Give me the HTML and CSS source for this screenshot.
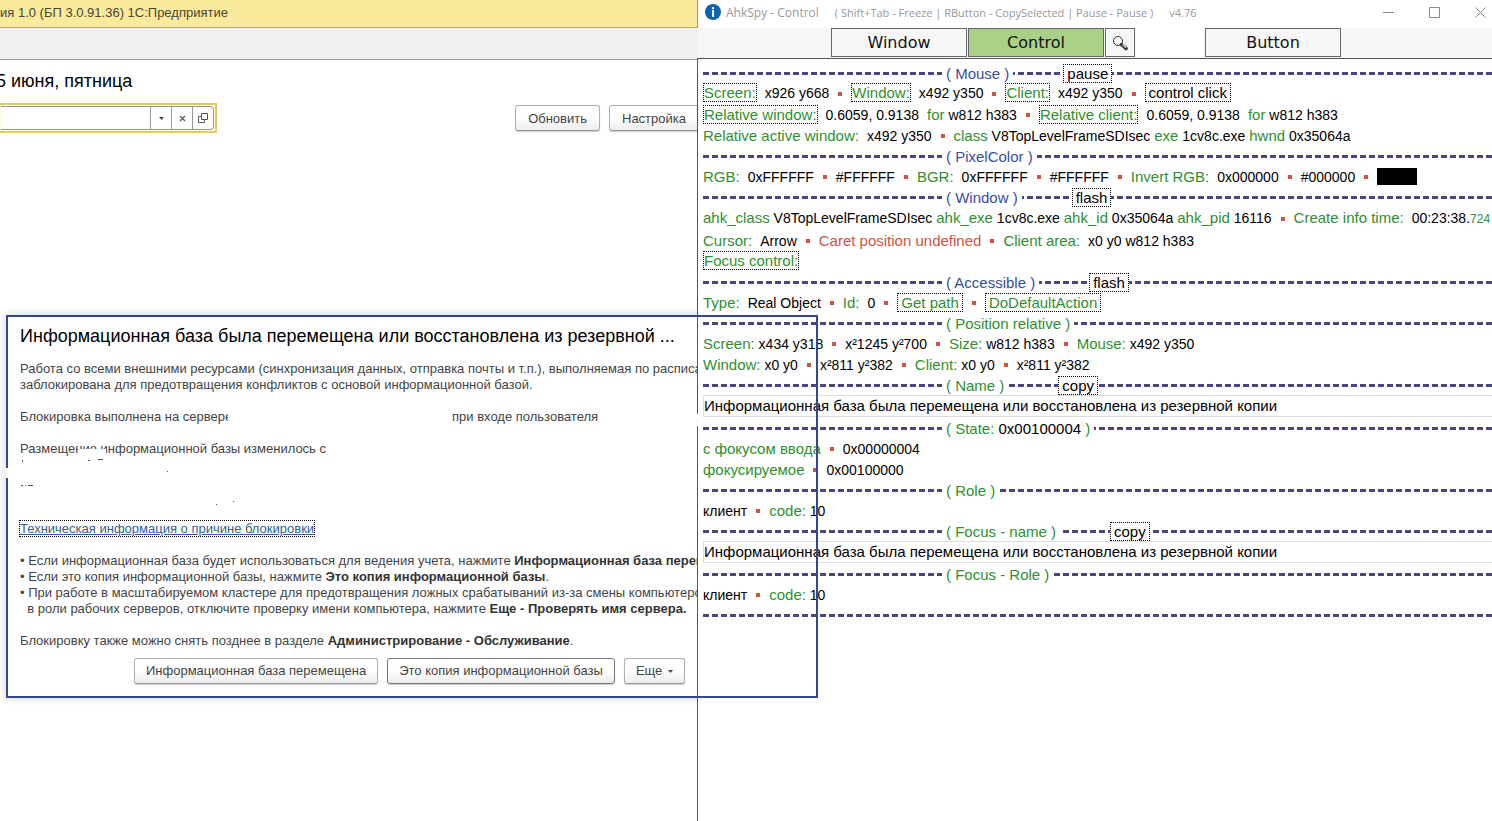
FILE: index.html
```html
<!DOCTYPE html>
<html lang="ru">

<head>
    <meta charset="UTF-8">
    <meta name="viewport" content="width=device-width, initial-scale=1.0">
    <title>AhkSpy - Control</title>
    <link rel="stylesheet" href="styles.css">
</head>

<body>
    <div class="desktop">
        <!-- 1C -->
        <main class="app">
            <header class="app-title"><span>ия 1.0 (БП 3.0.91.36) 1С:Предприятие</span></header>
            <div class="app-bar"></div>
            <h1 class="app-date">5 июня, пятница</h1>
            <div class="app-tools">
                <div class="field">
                    <input type="text" aria-label="Организация">
                    <button type="button" aria-label="Выбрать"><svg width="5" height="3"><path d="M0 0h5L2.500 3z" fill="#444"/></svg></button>
                    <button type="button" aria-label="Очистить"><svg width="7" height="7"><path d="M1 1l5 5M6 1l-5 5" stroke="#555" stroke-width="1.200"/></svg></button>
                    <button type="button" aria-label="Открыть"><svg width="10" height="10" fill="none" stroke="#555"><path d="M3.500 0.500h6v6h-6zM3 3.500H0.500v6h6V7"/></svg></button>
                </div>
                <div class="app-actions">
                    <button type="button" class="btn">Обновить</button>
                    <button type="button" class="btn">Настройка</button>
                </div>
            </div>
        </main>

        <section class="dialog">
            <h2>Информационная база была перемещена или восстановлена из резервной ...</h2>
            <div class="dialog-text">
                <p>Работа со всеми внешними ресурсами (синхронизация данных, отправка почты и т.п.), выполняемая по расписанию,<br>
                заблокирована для предотвращения конфликтов с основой информационной базой.</p>
                <p class="server"><span>Блокировка выполнена на сервере</span><span>при входе пользователя</span></p>
                <p class="moved">Размещение информационной базы изменилось с</p>
                <svg class="specks" width="240" height="64" fill="#555">
                    <path d="M2 3h1v2h-1zM68 3h2v1h-2zM78 2h5v1h-5zM147 14h1v1h-1zM1 28h2v1h-2zM5 28h1v1h-1zM8 28h5v1h-5zM196 47h1v1h-1zM213 44h1v1h-1z"/>
                </svg>
                <p><a href="#" class="tech">Техническая информация о причине блокировки</a></p>
                <p>• Если информационная база будет использоваться для ведения учета, нажмите <b>Информационная база перемещена</b>.<br>
                • Если это копия информационной базы, нажмите <b>Это копия информационной базы</b>.<br>
                • При работе в масштабируемом кластере для предотвращения ложных срабатываний из-за смены компьютеров<br>
                &nbsp; в роли рабочих серверов, отключите проверку имени компьютера, нажмите <b>Еще - Проверять имя сервера.</b></p>
                <p>Блокировку также можно снять позднее в разделе <b>Администрирование - Обслуживание</b>.</p>
            </div>
            <div class="dialog-actions">
                <button type="button" class="btn">Информационная база перемещена</button>
                <button type="button" class="btn btn-focus">Это копия информационной базы</button>
                <button type="button" class="btn">Еще <svg width="5" height="3"><path d="M0 0h5L2.500 3z" fill="#444"/></svg></button>
            </div>
        </section>

        <!-- AhkSpy -->
        <section class="spy">
            <header class="spy-title">
                <svg width="16" height="16"><circle cx="8" cy="8" r="8" fill="#0f63b0"/><path d="M7 3h2v2h-2zM7 6h2v7h-2z" fill="#fff"/></svg>
                <span class="caption">AhkSpy - Control</span>
                <span class="keys">( Shift+Tab - Freeze | RButton - CopySelected | Pause - Pause )</span>
                <span class="version">v4.76</span>
                <div class="win-buttons">
                    <button type="button" aria-label="Свернуть"><svg width="11" height="11"><path d="M0 5.500h11"/></svg></button>
                    <button type="button" aria-label="Развернуть"><svg width="11" height="11"><path d="M0.500 0.500h10v10h-10z"/></svg></button>
                    <button type="button" aria-label="Закрыть"><svg width="11" height="11"><path d="M0.500 0.500l10 10M10.500 0.500l-10 10"/></svg></button>
                </div>
            </header>
            <nav class="spy-tabs">
                <button type="button" class="tab">Window</button>
                <button type="button" class="tab active">Control</button>
                <button type="button" class="tab find" aria-label="Поиск"><svg width="16" height="16" fill="none" stroke="#333"><circle cx="6" cy="6" r="4.500"/><path d="M9.500 9.500l4.500 4" stroke-width="3.500" stroke-linecap="round"/><path d="M10.500 9.500l3.500 3.200" stroke="#ddd" stroke-width="1.200"/></svg></button>
                <input type="text" class="search" aria-label="Текст поиска">
                <button type="button" class="tab">Button</button>
            </nav>
            <div class="report">
                <div class="head"><span class="blue">( Mouse )</span><button type="button" class="cmd">pause</button></div>
                <div class="row"><button type="button" class="key">Screen:</button><span class="val">x926 y668</span><i></i><button type="button" class="key">Window:</button><span class="val">x492 y350</span><i></i><button type="button" class="key">Client:</button><span class="val">x492 y350</span><i></i><button type="button" class="cmd">control click</button></div>
                <div class="row"><button type="button" class="key">Relative window:</button><span class="val">0.6059, 0.9138</span><em class="val">for</em> w812 h383<i></i><button type="button" class="key">Relative client:</button><span class="val">0.6059, 0.9138</span><em class="val">for</em> w812 h383</div>
                <div class="row"><em>Relative active window:</em><span class="val">x492 y350</span><i></i><em>class</em> V8TopLevelFrameSDIsec <em>exe</em> 1cv8c.exe <em>hwnd</em> 0x35064a</div>

                <div class="head"><span class="blue">( PixelColor )</span></div>
                <div class="row"><em>RGB:</em><span class="val">0xFFFFFF</span><i></i>#FFFFFF<i></i><em>BGR:</em><span class="val">0xFFFFFF</span><i></i>#FFFFFF<i></i><em>Invert RGB:</em><span class="val">0x000000</span><i></i>#000000<i></i><span class="swatch"></span></div>

                <div class="head"><span class="blue">( Window )</span><button type="button" class="cmd">flash</button></div>
                <div class="row tall"><em>ahk_class</em> V8TopLevelFrameSDIsec <em>ahk_exe</em> 1cv8c.exe <em>ahk_id</em> 0x35064a <em>ahk_pid</em> 16116<i></i><em>Create info time:</em><span class="val">00:23:38.</span><em class="ms">724</em></div>
                <div class="row"><em>Cursor:</em><span class="val">Arrow</span><i></i><span class="red">Caret position undefined</span><i></i><em>Client area:</em><span class="val">x0 y0 w812 h383</span></div>
                <div class="row"><button type="button" class="key">Focus control:</button></div>

                <div class="head"><span class="blue">( Accessible )</span><button type="button" class="cmd">flash</button></div>
                <div class="row"><em>Type:</em><span class="val">Real Object</span><i></i><em>Id:</em><span class="val">0</span><i></i><button type="button" class="cmd green">Get path</button><i></i><button type="button" class="cmd green">DoDefaultAction</button></div>

                <div class="head"><span>( Position relative )</span></div>
                <div class="row"><em>Screen:</em> x434 y318<i></i>x²1245 y²700<i></i><em>Size:</em> w812 h383<i></i><em>Mouse:</em> x492 y350</div>
                <div class="row"><em>Window:</em> x0 y0<i></i>x²811 y²382<i></i><em>Client:</em> x0 y0<i></i>x²811 y²382</div>

                <div class="head"><span>( Name )</span><button type="button" class="cmd">copy</button></div>
                <div class="name">Информационная база была перемещена или восстановлена из резервной копии</div>

                <div class="head"><span>( State: <b>0x00100004</b> )</span></div>
                <div class="row"><em>с фокусом ввода</em><i></i>0x00000004</div>
                <div class="row"><em>фокусируемое</em><i></i>0x00100000</div>

                <div class="head"><span>( Role )</span></div>
                <div class="row">клиент<i></i><em>code:</em> 10</div>

                <div class="head"><span>( Focus - name )</span><button type="button" class="cmd">copy</button></div>
                <div class="name">Информационная база была перемещена или восстановлена из резервной копии</div>

                <div class="head"><span>( Focus - Role )</span></div>
                <div class="row">клиент<i></i><em>code:</em> 10</div>
                <div class="head"></div>
            </div>
        </section>

        <!-- selected control outline -->
        <div class="marker"></div>
        <div class="wipe wipe-marker"></div>
        <div class="wipe wipe-edge"></div>
    </div>
</body>

</html>
```
FILE: styles.css
```css
* {
    box-sizing: border-box;
}

body {
    margin: 0;
    background: #fff;
    font-family: "Liberation Sans", Arial, sans-serif;
    overflow: hidden;
}

button,
input {
    font: inherit;
    color: inherit;
    margin: 0;
    padding: 0;
    border: none;
    background: none;
    border-radius: 0;
}

.desktop {
    position: relative;
    display: grid;
    grid-template-columns: 697fr 795fr;
    min-height: 100vh;
    overflow: hidden;
}

/* 1C window */
.app {
    min-width: 0;
    overflow: hidden;
    font-size: 13px;
    color: #444;
}

.app-title {
    height: 28px;
    line-height: 26px;
    background: #faeb9c;
    border-bottom: 1px solid #b5a878;
    color: #4a4530;
    white-space: nowrap;
}

.app-bar {
    height: 32px;
    background: #f0f0f0;
    border-bottom: 1px solid #999;
}

.app-date {
    margin: 11px 0 11px -4px;
    font-size: 18px;
    line-height: 21px;
    font-weight: normal;
    color: #000;
}

.app-tools {
    display: flex;
    justify-content: space-between;
    align-items: center;
}

.field {
    display: flex;
    height: 30px;
    width: 217px;
    padding: 1px;
    border: 2px solid #e0cc62;
    border-left: none;
    background: #fffbe0;
}

.field input {
    flex: 1;
    min-width: 0;
    background: #fff;
    border: 1px solid #999;
    border-left: none;
}

.field button {
    display: flex;
    align-items: center;
    justify-content: center;
    width: 21px;
    background: #fff;
    border: 1px solid #999;
    border-left: none;
}

.field button:last-child {
    border-radius: 0 4px 4px 0;
}

.app-actions {
    display: flex;
    gap: 9px;
    margin-right: -2px;
}

.btn {
    height: 26px;
    padding: 0 12px;
    border: 1px solid #b0b0b0;
    border-bottom-color: #999;
    border-radius: 3px;
    background: linear-gradient(#fff 50%, #ececec);
    box-shadow: 0 1px 1px rgba(0, 0, 0, 0.2);
    color: #444;
    white-space: nowrap;
}

.btn svg {
    margin-left: 2px;
    vertical-align: middle;
}

.btn-focus {
    border-color: #777;
}

.dialog {
    position: absolute;
    left: 6px;
    top: 315px;
    width: 812px;
    padding: 11px 14px 14px;
    background: #fff;
    box-shadow: 0 0 8px rgba(0, 0, 0, 0.2);
    color: #444;
    font-size: 13px;
    line-height: 16px;
    white-space: nowrap;
    overflow: hidden;
}

.dialog h2 {
    margin: 0 0 14px;
    font-size: 18px;
    line-height: 21px;
    font-weight: normal;
    color: #000;
}

.dialog p {
    margin: 0 0 16px;
}

.dialog b {
    color: #333;
}

.server {
    display: flex;
}

.server span:first-child {
    width: 208px;
    margin-right: 224px;
    overflow: hidden;
}

.dialog .moved {
    position: relative;
    margin: 0;
}

.moved::after {
    content: "";
    position: absolute;
    left: 58px;
    top: 8px;
    width: 28px;
    height: 8px;
    background: #fff;
}

.specks {
    display: block;
}

.tech {
    color: #2f5ea8;
    outline: 1px dotted #000;
}

.dialog-actions {
    display: flex;
    gap: 9px;
    margin: -7px 0 0 114px;
}

.dialog-actions .btn {
    padding: 0 11px;
}

/* AhkSpy window */
.spy {
    position: relative;
    z-index: 1;
    min-width: 0;
    display: flex;
    flex-direction: column;
    background: #fff;
    overflow: hidden;
}

.spy-title {
    display: flex;
    align-items: center;
    height: 28px;
    padding: 0 0 4px 7px;
    border-left: 1px solid #999;
    font-family: "Open Sans", "Noto Sans", sans-serif;
    font-size: 12px;
    color: #999;
    white-space: nowrap;
}

.caption {
    margin-left: 5px;
}

.keys,
.version {
    margin-left: 16px;
    font-size: 11px;
}

.win-buttons {
    display: flex;
    gap: 22px;
    margin-left: auto;
}

.win-buttons button {
    display: flex;
    align-items: center;
    justify-content: center;
    width: 24px;
    height: 24px;
}

.win-buttons svg {
    fill: none;
    stroke: #888;
}

.spy-tabs {
    display: flex;
    gap: 1px;
    height: 30px;
    padding: 0 0 1px 134px;
    background: #f6f6f6;
}

.tab {
    width: 136px;
    border: 1px solid #666;
    background: #f6f6f6;
    font-family: "DejaVu Sans", Verdana, sans-serif;
    font-size: 16px;
    color: #111;
}

.tab.active {
    background: #a9d185;
}

.find {
    display: flex;
    align-items: center;
    justify-content: center;
    width: 30px;
}

.search {
    width: 68px;
    background: #fff;
}

.report {
    flex: 1;
    padding: 4px 0 0 5px;
    border-top: 1px solid #555;
    border-left: 1px solid #555;
    font-size: 15px;
    color: #000;
    white-space: nowrap;
}

.head {
    display: flex;
    align-items: center;
    height: 20px;
    padding-left: 239px;
    color: #2f8f2f;
    background: repeating-linear-gradient(to right, #4a4680 0, #4a4680 6px, transparent 6px, transparent 9px) 0 9px / 100% 3px no-repeat;
}

.head span {
    padding: 0 4px;
    background: #fff;
}

.head b {
    font-weight: normal;
    color: #000;
}

.head .cmd {
    margin-left: 50px;
    color: #000;
}

.head .blue {
    color: #364f9c;
}

.row {
    display: flex;
    align-items: baseline;
    height: 21px;
    line-height: 21px;
    font-size: 14px;
    white-space: pre;
}

.row.tall {
    height: 23px;
}

.row em,
.row button,
.row .red {
    font-size: 15px;
    font-style: normal;
}

.row em,
.row .green {
    color: #2f8f2f;
}

.row i {
    flex: none;
    align-self: center;
    width: 4px;
    height: 4px;
    margin: 0 9px;
    background: #cc5544;
}

.row .val {
    margin-left: 8px;
}

.row .ms {
    font-size: 12px;
}

.row .red {
    color: #cc5544;
}

.key,
.cmd {
    height: 19px;
    line-height: 17px;
    border: 1px dotted #000;
    background: #fff;
}

.key {
    color: #2f8f2f;
}

.cmd {
    padding: 0 3px;
}

.swatch {
    align-self: center;
    width: 40px;
    height: 17px;
    background: #000;
}

.name {
    height: 22px;
    margin-bottom: 1px;
    line-height: 20px;
    border: 1px solid #ddd;
    border-right: none;
}

.marker {
    position: absolute;
    z-index: 2;
    left: 6px;
    top: 315px;
    width: 812px;
    height: 383px;
    border: 2px solid #35488a;
}

.wipe {
    position: absolute;
    z-index: 3;
    background: #fff;
}

.wipe-marker {
    left: 5px;
    top: 468px;
    width: 4px;
    height: 10px;
}

.wipe-edge {
    left: 696px;
    top: 414px;
    width: 5px;
    height: 12px;
}
```
